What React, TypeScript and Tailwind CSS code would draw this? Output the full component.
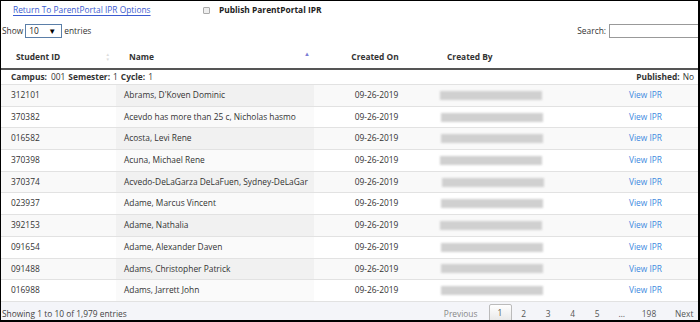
import React from 'react';

const rows = [
  { id: '312101', name: "Abrams, D'Koven Dominic", bar: 0 },
  { id: '370382', name: 'Acevdo has more than 25 c, Nicholas hasmo', bar: 1 },
  { id: '016582', name: 'Acosta, Levi Rene', bar: 1 },
  { id: '370398', name: 'Acuna, Michael Rene', bar: 0 },
  { id: '370374', name: 'Acvedo-DeLaGarza DeLaFuen, Sydney-DeLaGar', bar: 2 },
  { id: '023937', name: 'Adame, Marcus Vincent', bar: 1 },
  { id: '392153', name: 'Adame, Nathalia', bar: 0 },
  { id: '091654', name: 'Adame, Alexander Daven', bar: 1 },
  { id: '091488', name: 'Adams, Christopher Patrick', bar: 1 },
  { id: '016988', name: 'Adams, Jarrett John', bar: 1 },
];

const pages = ['2', '3', '4', '5', '…'];

const App = () => {
  return (
    <div className="w-[700px] h-[322px] overflow-hidden bg-white border-t border-l border-r-2 border-b-2 border-black font-['Open_Sans',sans-serif] text-[8.4px] text-[#333] flex flex-col">
      {/* top links */}
      <div className="h-[18px] flex items-center shrink-0">
        <a className="ml-[12px] text-[#3b5bd0] underline underline-offset-2 w-[190px]">
          Return To ParentPortal IPR Options
        </a>
        <span className="w-[7px] h-[7px] border border-[#aaa] bg-[#eee] rounded-[1px]" />
        <span className="ml-[9px] font-bold text-[#222]">Publish ParentPortal IPR</span>
      </div>

      {/* show / search */}
      <div className="h-[24px] flex items-center shrink-0">
        <span className="ml-[1px]">Show</span>
        <div className="ml-[2px] w-[37px] h-[14px] border border-[#5b7fa8] flex items-center justify-between pl-[3px] pr-[5px] text-[#222]">
          <span>10</span>
          <span className="text-[8px] text-black">▼</span>
        </div>
        <span className="ml-[2px]">entries</span>
        <span className="ml-auto">Search:</span>
        <div className="ml-[3px] w-[89px] h-[14px] border border-r-0 border-[#999] bg-white" />
      </div>

      {/* header */}
      <div className="h-[27px] pt-[3px] grid grid-cols-[115px_198px_124px_183px_1fr] items-center font-bold text-[#333] border-b-2 border-[#555] shrink-0">
        <div className="pl-[15px] pr-[6px] flex items-center justify-between">
          <span>Student ID</span>
          <span className="flex flex-col leading-none text-[#ddd] text-[4.5px]">
            <span>▲</span>
            <span>▼</span>
          </span>
        </div>
        <div className="pl-[13px] pr-[4px] flex items-center justify-between">
          <span>Name</span>
          <span className="text-[#7c7cd4] text-[6px] -mt-[4px]">▲</span>
        </div>
        <div className="text-center pr-[2px]">Created On</div>
        <div className="pl-[9px]">Created By</div>
        <div />
      </div>

      {/* campus line */}
      <div className="h-[14px] flex items-center px-[10px] pr-[4px] shrink-0">
        <span className="font-bold">Campus:</span>
        <span className="ml-[4px]">001</span>
        <span className="ml-[3px] font-bold">Semester:</span>
        <span className="ml-[3px]">1</span>
        <span className="ml-[3px] font-bold">Cycle:</span>
        <span className="ml-[3px]">1</span>
        <span className="ml-auto font-bold">Published:</span>
        <span className="ml-[3px]">No</span>
      </div>

      {/* rows */}
      <div className="flex flex-col shrink-0">
        {rows.map((r, i) => {
          const odd = i % 2 === 0;
          return (
            <div
              key={r.id}
              className={`h-[21.7px] grid grid-cols-[115px_198px_124px_183px_1fr] items-center border-t border-[#e2e2e2] ${odd ? 'bg-[#f9f9f9]' : 'bg-white'}`}
            >
              <div className="pl-[10px]">{r.id}</div>
              <div className={`h-full flex items-center pl-[8px] ${odd ? 'bg-[#f1f1f1]' : 'bg-[#fafafa]'}`}>{r.name}</div>
              <div className="text-center pl-[1px]">09-26-2019</div>
              <div className="flex items-center">
                <div
                  className={`h-[9px] w-[102px] bg-[#d0d0d0] blur-[1px] ${r.bar === 0 ? 'ml-[2px]' : r.bar === 1 ? 'ml-[3px]' : 'ml-[4px]'}`}
                />
              </div>
              <div className="pl-[8px] text-[#3d89e0]">View IPR</div>
            </div>
          );
        })}
      </div>

      {/* footer */}
      <div className="flex-1 bg-[#f4f5f9] border-t border-[#e2e2e2] flex items-start text-[#444]">
        <span className="ml-[1px] mt-[6px]">Showing 1 to 10 of 1,979 entries</span>
        <div className="ml-auto flex items-start text-[#555]">
          <span className="text-[#888] mt-[6px]">Previous</span>
          <span className="ml-[11px] w-[23px] h-[19px] mt-[2px] flex items-center justify-center border border-[#bbb] rounded-[2px] bg-gradient-to-b from-white to-[#e6e6e6]">
            1
          </span>
          {pages.map((p) => (
            <span key={p} className="mt-[6px] w-[24.5px] text-center">
              {p}
            </span>
          ))}
          <span className="mt-[6px] w-[30px] text-center">198</span>
          <span className="mt-[6px] ml-[11px] w-[23px]">Next</span>
        </div>
      </div>
    </div>
  );
};

export default App;
